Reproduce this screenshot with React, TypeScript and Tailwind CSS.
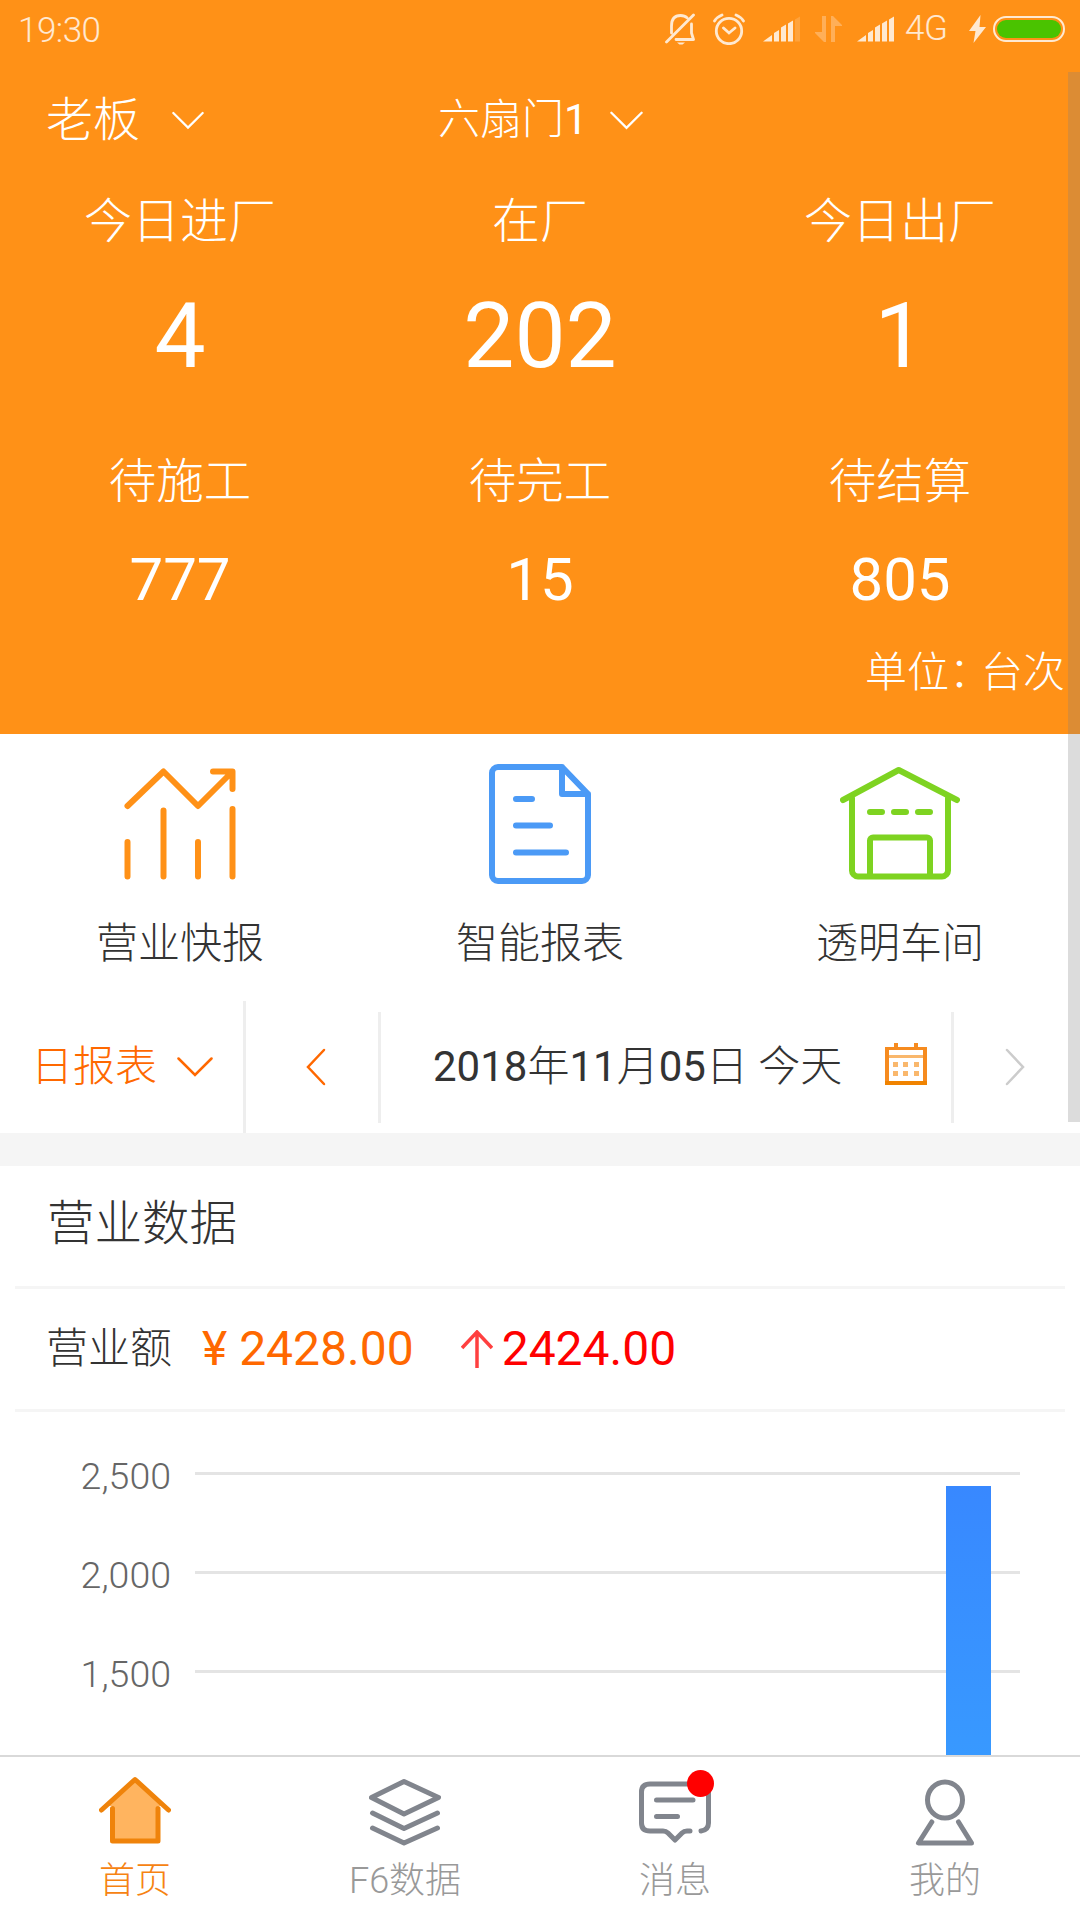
import type { ReactNode } from "react";

const todayStats = [
  { label: "今日进厂", value: "4" },
  { label: "在厂", value: "202" },
  { label: "今日出厂", value: "1" },
];

const pendingStats = [
  { label: "待施工", value: "777" },
  { label: "待完工", value: "15" },
  { label: "待结算", value: "805" },
];

function ChevronDown({ className }: { className: string }) {
  return (
    <svg viewBox="0 0 36 20" className={className} fill="none" stroke="currentColor" strokeWidth="2.5" strokeLinecap="round">
      <path d="M1.5 1.5 18 18 34.5 1.5" />
    </svg>
  );
}

function Signal({ weak }: { weak?: boolean }) {
  return (
    <svg width="37" height="26" viewBox="0 0 37 26" fill="currentColor">
      <path d="M0 25.5 9 19v6.500zM11 17l5-3v11.500h-5zM18 11.500l5-3v17h-5zM25 7.500l5-3v21h-5z" />
      <path d="M32 3.500 37 .5v25h-5z" opacity={weak ? 0.2 : 1} />
    </svg>
  );
}

function StatusBar() {
  return (
    <div className="flex h-[72px] items-start pl-[18px] pr-[15px] text-white/80">
      <span className="mt-[11px] text-[35px] font-light leading-[40px] tracking-[-0.5px]">19:30</span>
      <div className="ml-auto flex items-center pt-[13px]">
        <svg width="31" height="32" viewBox="0 0 31 32" fill="none" stroke="currentColor" strokeWidth="2.800" strokeLinecap="round" strokeLinejoin="round">
          <path d="M1.500 29 28.500 2M6.500 20v-7C6.500 6 10 2.500 15.500 2.500c3 0 5 .8 6.500 2.300M26.500 11v9l2 6.500H11" />
          <path d="M12 29.500h8l-2.500 2h-3z" fill="currentColor" stroke="none" />
        </svg>
        <svg width="32" height="32" viewBox="0 0 32 32" className="ml-[17px]" fill="none" stroke="currentColor" strokeWidth="2.800" strokeLinecap="round">
          <circle cx="16" cy="18" r="12.700" />
          <path d="m10.500 15 5.500 5 6-5M1.500 8 Q4 4 9 2M30.500 8 Q28 4 23 2" />
        </svg>
        <span className="ml-[18px] flex"><Signal weak /></span>
        <svg width="27" height="26" viewBox="0 0 27 26" className="ml-[15px]" fill="currentColor" opacity="0.350">
          <path d="M7 0h4v26H9L0 17v-1h7zM16 26h4V10h7V9L18 0h-2z" />
        </svg>
        <span className="ml-[15px] flex"><Signal /></span>
        <span className="ml-[11px] w-[46px] font-[Roboto] text-[35px] font-light leading-[32px] tracking-[-0.3px]">4G</span>
        <svg width="17" height="28" viewBox="0 0 17 28" className="ml-[18px]" fill="currentColor">
          <path d="M11.500 0 0 16h6.500L4.500 28 17 12h-6.500z" />
        </svg>
        <div className="ml-[7px] flex h-[26px] w-[72px] rounded-full border-2 border-white/80 p-[2px]">
          <div className="flex-1 rounded-full bg-[#4ac300]"></div>
        </div>
      </div>
    </div>
  );
}

function ReportIcon() {
  return (
    <svg width="120" height="120" viewBox="0 0 120 120" fill="none" stroke="#ff9117" strokeWidth="6" strokeLinecap="round" strokeLinejoin="round">
      <path d="M7.500 42 43.500 7.500 78 42 111 9M93 7.500h19.500V25M7.500 78v34.500M43.500 46.500v66M78 78v34.500M112.500 45v67.500" />
    </svg>
  );
}

function DocumentIcon() {
  return (
    <svg width="120" height="120" viewBox="0 0 120 120" fill="none" stroke="#4b9af6" strokeWidth="6" strokeLinecap="round" strokeLinejoin="round">
      <path d="M82 3H18a6 6 0 0 0-6 6v102a6 6 0 0 0 6 6h84a6 6 0 0 0 6-6V30zV30h26M36 35h16M36 61.500h34M36 88.500h50" />
    </svg>
  );
}

function GarageIcon() {
  return (
    <svg width="120" height="120" viewBox="0 0 120 120" fill="none" stroke="#7ed321" strokeWidth="6" strokeLinecap="round" strokeLinejoin="round">
      <path d="M3 36 58.700 6 117 36M12 34v72a6 6 0 0 0 6 6.500h84a6 6 0 0 0 6-6.500V34M30 111V76.500a3 3 0 0 1 3-3h54a3 3 0 0 1 3 3V111M30 48h12M54 48h12M78 48h12" />
    </svg>
  );
}

const shortcuts = [
  { label: "营业快报", icon: <ReportIcon /> },
  { label: "智能报表", icon: <DocumentIcon /> },
  { label: "透明车间", icon: <GarageIcon /> },
];

function CalendarIcon() {
  return (
    <svg width="42" height="42" viewBox="0 0 42 42" fill="#f68b1f">
      <path fillRule="evenodd" d="M0 4h9V0h4v4h16V0h4v4h9v38H0zM4 7v31h34V7z" />
      <path d="M0 38h42v4H0z" fill="#f08300" />
      <path d="M4 12h34v3H4zM8 19h5v5H8zM18 19h5v5h-5zM29 19h5v5h-5zM8 28h5v5H8zM18 28h5v5h-5zM29 28h5v5h-5z" fill="#f9b76c" />
    </svg>
  );
}

function TabIcon({ children }: { children: ReactNode }) {
  return (
    <svg width="72" height="72" viewBox="0 0 72 72" fill="none" stroke="#81858d" strokeWidth="5" strokeLinecap="round" strokeLinejoin="round">
      {children}
    </svg>
  );
}

const tabs = [
  {
    label: "首页",
    active: true,
    icon: (
      <TabIcon>
        <path d="M36 4 8 30h5.500v34.500h45V30H64z" fill="#ffb45f" stroke="none" />
        <path d="M2.500 34 36 3.500 69.500 34M13.500 32.500v32.500h45.500V32.500" stroke="#ef830b" />
      </TabIcon>
    ),
  },
  {
    label: "F6数据",
    icon: (
      <TabIcon>
        <path d="M35 5.500 69.500 21.500 35 38 2.500 21.500zM3.500 37 35 52.500 68.500 37M3.500 52 35 67 68.500 52" />
      </TabIcon>
    ),
  },
  {
    label: "消息",
    badge: true,
    icon: (
      <TabIcon>
        <path d="M51 55h-3q-3 0-5 2l-7 7-7-7q-2-2-5-2H11q-8.500 0-8.500-8V16q0-8 8.500-8h50q8.500 0 8.500 8v31q0 7-7.500 8M17.500 24H54M17.500 40.500h21" />
      </TabIcon>
    ),
  },
  {
    label: "我的",
    icon: (
      <TabIcon>
        <ellipse cx="36" cy="24" rx="17.500" ry="18" />
        <path d="M22.800 46 9.500 67h53L49.500 46" />
      </TabIcon>
    ),
  },
];

export default function App() {
  return (
    <div className="relative flex h-[1920px] w-[1080px] flex-col overflow-hidden bg-white font-[Roboto,'Noto_Sans_CJK_SC',sans-serif] text-[#333]">
      {/* Header */}
      <header className="h-[734px] shrink-0 bg-[#ff9117] text-white">
        <StatusBar />
        <div className="flex h-[96px] items-center">
          <div className="flex w-[438px] items-center pl-[46px]">
            <span className="text-[47px] font-light leading-[64px]">老板</span>
            <ChevronDown className="ml-8 h-[19px] w-[32px]" />
          </div>
          <div className="flex items-center">
            <span className="text-[42px] font-light leading-[64px]">六扇门<span className="font-normal">1</span></span>
            <ChevronDown className="ml-[22px] h-[19px] w-[33px]" />
          </div>
        </div>
        <div className="grid grid-cols-3 text-center">
          {todayStats.map((item) => (
            <div key={item.label}>
              <p className="pt-[22px] text-[48px] font-light leading-[64px]">{item.label}</p>
              <p className="mt-[26px] text-[91px] leading-[112px]">{item.value}</p>
            </div>
          ))}
        </div>
        <div className="grid grid-cols-3 text-center">
          {pendingStats.map((item) => (
            <div key={item.label}>
              <p className="mt-[58px] text-[47.500px] font-light leading-[64px]">{item.label}</p>
              <p className="mt-[30px] text-[60px] leading-[72px]">{item.value}</p>
            </div>
          ))}
        </div>
        <p className="mt-[27px] pr-[15px] text-right text-[42px] font-light leading-[60px]">
          单位<span className="mr-[-10px]">：</span>台次
        </p>
      </header>

      {/* Shortcuts */}
      <div className="grid h-[267px] shrink-0 grid-cols-3 pt-[30px]">
        {shortcuts.map((item) => (
          <div key={item.label} className="flex flex-col items-center">
            {item.icon}
            <span className="mt-[30px] text-[42px] font-light leading-[60px]">{item.label}</span>
          </div>
        ))}
      </div>

      {/* Date picker row */}
      <div className="flex h-[132px] shrink-0 items-center">
        <div className="flex h-full w-[246px] items-center border-r-[3px] border-[#eee] pl-[31px] text-[#ff6800]">
          <span className="text-[42px] font-light leading-[60px]">日报表</span>
          <ChevronDown className="ml-[20px] h-[20px] w-[36px]" />
        </div>
        <div className="flex h-[111px] w-[135px] items-center border-r-[3px] border-[#eee] pl-[60px] text-[#ff6800]">
          <svg width="20" height="38" viewBox="0 0 20 38" fill="none" stroke="currentColor" strokeWidth="2.500" strokeLinecap="round">
            <path d="M18 2 2 19l16 17" />
          </svg>
        </div>
        <div className="flex h-[111px] w-[573px] items-center border-r-[3px] border-[#eee] pl-[52px]">
          <span className="w-[452px] whitespace-nowrap text-[42px] leading-[60px]">
            2018<span className="font-light">年</span>11<span className="font-light">月</span>05<span className="font-light">日</span> <span className="font-light">今天</span>
          </span>
          <div className="-mt-1.5"><CalendarIcon /></div>
        </div>
        <svg width="20" height="38" viewBox="0 0 20 38" className="ml-[51px]" fill="none" stroke="#ccc" strokeWidth="2.500" strokeLinecap="round">
          <path d="m2 2 16 17L2 36" />
        </svg>
      </div>

      <div className="h-[33px] shrink-0 bg-[#f5f5f5]"></div>

      {/* Revenue */}
      <section className="min-h-0 flex-1 overflow-hidden px-[15px]">
        <h2 className="h-[123px] border-b-[3px] border-[#f5f5f5] pl-8 text-[47.500px] font-light leading-[117px]">营业数据</h2>
        <div className="flex h-[123px] items-center border-b-[3px] border-[#f5f5f5] pl-[31px]">
          <span className="text-[42px] font-light leading-[60px]">营业额</span>
          <span className="ml-[30px] text-[48px] leading-[60px] text-[#ff6800]">¥ 2428.00</span>
          <svg width="32" height="38" viewBox="0 0 32 38" className="ml-[47px]" fill="none" stroke="#ff4040" strokeWidth="3.500">
            <path d="M16 38V2M1 18 16 2l15 16" />
          </svg>
          <span className="ml-[9px] text-[48px] leading-[60px] text-[#f00]">2424.00</span>
        </div>
        {/* Chart */}
        <div className="relative pt-[33px]">
          {["2,500", "2,000", "1,500"].map((tick) => (
            <div key={tick} className="flex h-[99px] items-start">
              <span className="w-[156px] pt-[9px] text-right text-[37.500px] font-light leading-[44px] text-[#666]">{tick}</span>
              <div className="ml-6 mt-[27px] h-[3px] w-[825px] bg-[#e4e4e4]"></div>
            </div>
          ))}
          <div className="absolute left-[931px] top-[74px] h-[270px] w-[45px] bg-linear-to-b from-[#3888ff] to-[#3899ff]"></div>
        </div>
      </section>

      {/* Tab bar */}
      <nav className="grid h-[165px] shrink-0 grid-cols-4 border-t-2 border-[#d9d9d9] bg-white">
        {tabs.map((tab) => (
          <div key={tab.label} className="flex flex-col items-center pt-[19px]">
            <div className="relative">
              {tab.icon}
              {tab.badge && <span className="absolute left-[48px] top-[-6px] size-[27px] rounded-full bg-[#f00]"></span>}
            </div>
            <span className={tab.active ? "mt-2 text-[36px] font-light leading-[50px] text-[#f68312]" : "mt-2 text-[36px] font-light leading-[50px] text-[#999]"}>
              {tab.label}
            </span>
          </div>
        ))}
      </nav>

      {/* Scrollbar */}
      <div className="absolute right-0 top-[72px] h-[1050px] w-[12px] bg-[#808080]/28"></div>
    </div>
  );
}
